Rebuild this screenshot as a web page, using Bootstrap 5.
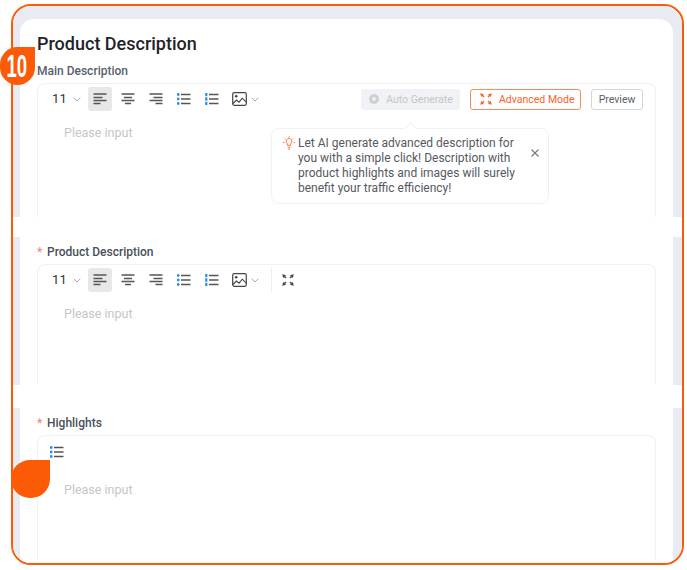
<!doctype html>
<html lang="en"><head><meta charset="utf-8"><title>Product Description</title>
<link rel="stylesheet" href="https://cdn.jsdelivr.net/npm/bootstrap@5.3.0/dist/css/bootstrap.min.css">
<style>
html,body{height:570px;overflow:hidden;background:#fff;margin:0}
body{font-family:Roboto,"Liberation Sans",sans-serif;font-size:12px;color:#595f6b}
.frame{margin:4px 3px 0 11px;height:561px;border:2px solid #fb5a07;border-radius:20px;overflow:hidden;background:#fff}
.band{background:#e9ebf2;padding:0 9px 0 7px}
.band-a{height:211px;padding-top:13px}
.band-b{height:148px;margin-top:20px}
.band-c{height:155px;margin-top:23px}
.sheet{background:#fff;height:100%;padding:0 17px}
.band-a .sheet{border-radius:14px 14px 0 0;padding-top:13px}
.band-b .sheet{padding-top:8px}
.band-c .sheet{padding-top:8px}
.pg-title{font-size:18px;font-weight:500;color:#1f2329;line-height:24px;margin:0 0 8px}
.fld-label{font-size:12px;font-weight:500;color:#595f6b;line-height:15px;margin:0 0 4px;display:flex;align-items:center}
.band-b .fld-label,.band-c .fld-label{color:#4a4f5a}
.req{color:#f08a8a;width:10px;font-size:12px}
.editor{position:relative;border:1px solid #f0f1f4;border-bottom:0;border-radius:8px 8px 0 0;padding:3px 13px 0 14px}
.ed-a{height:134px}.ed-b{height:120px}.ed-c{height:125px}
.tools{height:24px;display:flex;align-items:center}
.fs{font-size:13px;color:#333;width:21px;line-height:24px;letter-spacing:.2px}
.chev{display:block}
.tb{width:24px;height:24px;margin-right:4px;border-radius:3px;display:flex;align-items:center;justify-content:center;flex:none}
.tb-on{background:#e8e8e8}
.tb-img{width:22px;margin-right:1px}
.fs-chev{width:15px;flex:none}
.sep{width:1px;height:24px;background:#eceef1;margin:0 4px 0 12px;flex:none}
.hint{font-size:12.5px;color:#c4c6ca;line-height:16px;padding:0 0 0 12px;margin-top:14px}
.ed-c .hint{margin-top:18px}
.ed-c .tools{margin-top:1px;margin-left:-2px}
.btn-a,.btn-m,.btn-p{font-size:10.5px;line-height:19px;height:21px;padding:0;display:flex;align-items:center;justify-content:center;border-radius:3px}
.btn-a{width:99px;background:#f1f2f5;color:#c4c6cb;border:0;gap:6px}
.btn-m{width:111px;background:#fff;color:#f4642a;border:1px solid #f58a5c;gap:6px;margin-left:10px;justify-content:flex-start;padding-left:8px}
.btn-p{width:52px;background:#fff;color:#5b5f66;border:1px solid #d4d6da;margin-left:10px;margin-right:-1px}
.tip{position:absolute;left:233px;top:44px;width:278px;height:76px;background:#fff;border:1px solid #f0f1f4;border-radius:8px;padding:7px 30px 0 26px;font-size:12px;line-height:15px;color:#55595f}
.tip::before{content:"";position:absolute;left:134px;top:-5px;width:9px;height:9px;background:#fff;border-left:1px solid #f0f1f4;border-top:1px solid #f0f1f4;transform:rotate(45deg)}
.bulb{position:absolute;left:10px;top:7px}
.x-ic{position:absolute;right:8px;top:19px}
.num-badge{position:absolute;left:0;top:47px;width:35px;height:38px;background:#fb5a07;color:#fff;border-radius:19px 0 19px 19px;font-family:"Liberation Sans",sans-serif;font-weight:700;font-size:32px;line-height:38px;text-align:center}
.num-txt{display:inline-block;transform:scaleX(.58);margin-left:-1px}
.drop{position:absolute;left:11px;top:460px;width:39px;height:38px;background:#fb5a07;border-radius:19px 0 19px 19px}
</style></head>
<body>
<svg width="0" height="0" class="position-absolute"><defs>
<symbol id="i-left" viewBox="0 0 14 14"><path d="M.5 2h13M.5 5.500h9M.5 8.500h13M.5 11.500h7" stroke="#555" stroke-width="1.300" fill="none"/></symbol>
<symbol id="i-center" viewBox="0 0 14 14"><path d="M.5 2h13M3 5.500h8M.5 8.500h13M4 11.500h6" stroke="#555" stroke-width="1.300" fill="none"/></symbol>
<symbol id="i-right" viewBox="0 0 14 14"><path d="M.5 2h13M4.500 5.500h9M.5 8.500h13M6.500 11.500h7" stroke="#555" stroke-width="1.300" fill="none"/></symbol>
<symbol id="i-ul" viewBox="0 0 14 14"><g fill="#2b8cf0"><circle cx="1.200" cy="2.500" r="1.400"/><circle cx="1.200" cy="7" r="1.400"/><circle cx="1.200" cy="11.500" r="1.400"/></g><path d="M4 2.500h9.500M4 7h9.500M4 11.500h9.500" stroke="#555" stroke-width="1.300"/></symbol>
<symbol id="i-ol" viewBox="0 0 14 14"><g fill="#2b8cf0"><rect x=".2" y="1" width="2.200" height="3.200"/><rect x=".2" y="5.300" width="2.200" height="3.400"/><rect x=".2" y="9.800" width="2.200" height="3.200"/></g><path d="M4 2.500h9.500M4 7h9.500M4 11.500h9.500" stroke="#555" stroke-width="1.300"/></symbol>
<symbol id="i-img" viewBox="0 0 15 14"><rect x=".7" y=".7" width="13.600" height="12.600" rx="1.500" fill="none" stroke="#444" stroke-width="1.200"/><circle cx="4.200" cy="4.300" r="1.300" fill="#444"/><path d="M1 11.500l3.500-3.500 2.500 2.200 3.300-4 4 4" fill="none" stroke="#444" stroke-width="1.100"/></symbol>
<symbol id="i-exp" viewBox="0 0 14 14"><path d="M1.200 1.200L5 2.200 2.200 5zM12.800 1.200L9 2.200 11.800 5zM1.200 12.800L5 11.800 2.200 9zM12.800 12.800L9 11.800 11.800 9z" fill="currentColor"/><path d="M2.500 2.500l2.500 2.500M11.500 2.500L9 5M2.500 11.500L5 9M11.500 11.500L9 9" stroke="currentColor" stroke-width="1.400"/></symbol>
<symbol id="i-chev" viewBox="0 0 8 5"><path d="M.7.7L4 4l3.300-3.300" fill="none" stroke="#a9adb3" stroke-width="1"/></symbol>
</defs></svg>
<div class="frame">
  <div class="band band-a"><div class="sheet">
    <h1 class="pg-title">Product Description</h1>
    <div class="fld-label">Main Description</div>
    <div class="editor ed-a">
      <div class="tools">
        <span class="fs">11</span><span class="fs-chev"><svg class="chev" width="8" height="5"><use href="#i-chev"/></svg></span>
        <span class="tb tb-on"><svg width="14" height="14"><use href="#i-left"/></svg></span>
        <span class="tb"><svg width="14" height="14"><use href="#i-center"/></svg></span>
        <span class="tb"><svg width="14" height="14"><use href="#i-right"/></svg></span>
        <span class="tb"><svg width="14" height="14"><use href="#i-ul"/></svg></span>
        <span class="tb"><svg width="14" height="14"><use href="#i-ol"/></svg></span>
        <span class="tb tb-img"><svg width="15" height="14"><use href="#i-img"/></svg></span>
        <svg class="chev" width="8" height="5"><use href="#i-chev"/></svg>
        <div class="d-flex ms-auto">
          <button type="button" class="btn-a"><svg width="12" height="12" viewBox="0 0 12 12"><circle cx="6" cy="6" r="5" fill="#cdd0d5"/><circle cx="6" cy="6" r="2" fill="#eef0f3"/></svg>Auto Generate</button>
          <button type="button" class="btn-m"><svg width="14" height="14" style="color:#f4642a"><use href="#i-exp"/></svg>Advanced Mode</button>
          <button type="button" class="btn-p">Preview</button>
        </div>
      </div>
      <div class="hint">Please input</div>
      <div class="tip">
        <svg class="bulb" width="14" height="14" viewBox="0 0 14 14" fill="none" stroke="#f5793b" stroke-width="1"><path d="M4.500 6.500a2.800 2.800 0 1 1 5 0c-.5.9-1 1.400-1 2.800h-3c0-1.400-.5-1.900-1-2.800zM5.500 11.200h3M6 13h2M7 .3v1.200M1 6.500h1.300M11.700 6.500H13M2.700 2.300l.9.9M11.300 2.300l-.9.9"/></svg>
        Let AI generate advanced description for you with a simple click! Description with product highlights and images will surely benefit your traffic efficiency!
        <svg class="x-ic" width="10" height="10" viewBox="0 0 10 10"><path d="M1.500 1.500l7 7M8.500 1.500l-7 7" stroke="#777" stroke-width="1.100"/></svg>
      </div>
    </div>
  </div></div>

  <div class="band band-b"><div class="sheet">
    <div class="fld-label"><span class="req">*</span>Product Description</div>
    <div class="editor ed-b">
      <div class="tools">
        <span class="fs">11</span><span class="fs-chev"><svg class="chev" width="8" height="5"><use href="#i-chev"/></svg></span>
        <span class="tb tb-on"><svg width="14" height="14"><use href="#i-left"/></svg></span>
        <span class="tb"><svg width="14" height="14"><use href="#i-center"/></svg></span>
        <span class="tb"><svg width="14" height="14"><use href="#i-right"/></svg></span>
        <span class="tb"><svg width="14" height="14"><use href="#i-ul"/></svg></span>
        <span class="tb"><svg width="14" height="14"><use href="#i-ol"/></svg></span>
        <span class="tb tb-img"><svg width="15" height="14"><use href="#i-img"/></svg></span>
        <svg class="chev" width="8" height="5"><use href="#i-chev"/></svg>
        <span class="sep"></span>
        <span class="tb"><svg width="14" height="14" style="color:#444"><use href="#i-exp"/></svg></span>
      </div>
      <div class="hint">Please input</div>
    </div>
  </div></div>

  <div class="band band-c"><div class="sheet">
    <div class="fld-label"><span class="req">*</span>Highlights</div>
    <div class="editor ed-c">
      <div class="tools"><svg width="14" height="14"><use href="#i-ul"/></svg></div>
      <div class="hint">Please input</div>
    </div>
  </div></div>
</div>
<div class="num-badge"><span class="num-txt">10</span></div>
<div class="drop"></div>
</body></html>
